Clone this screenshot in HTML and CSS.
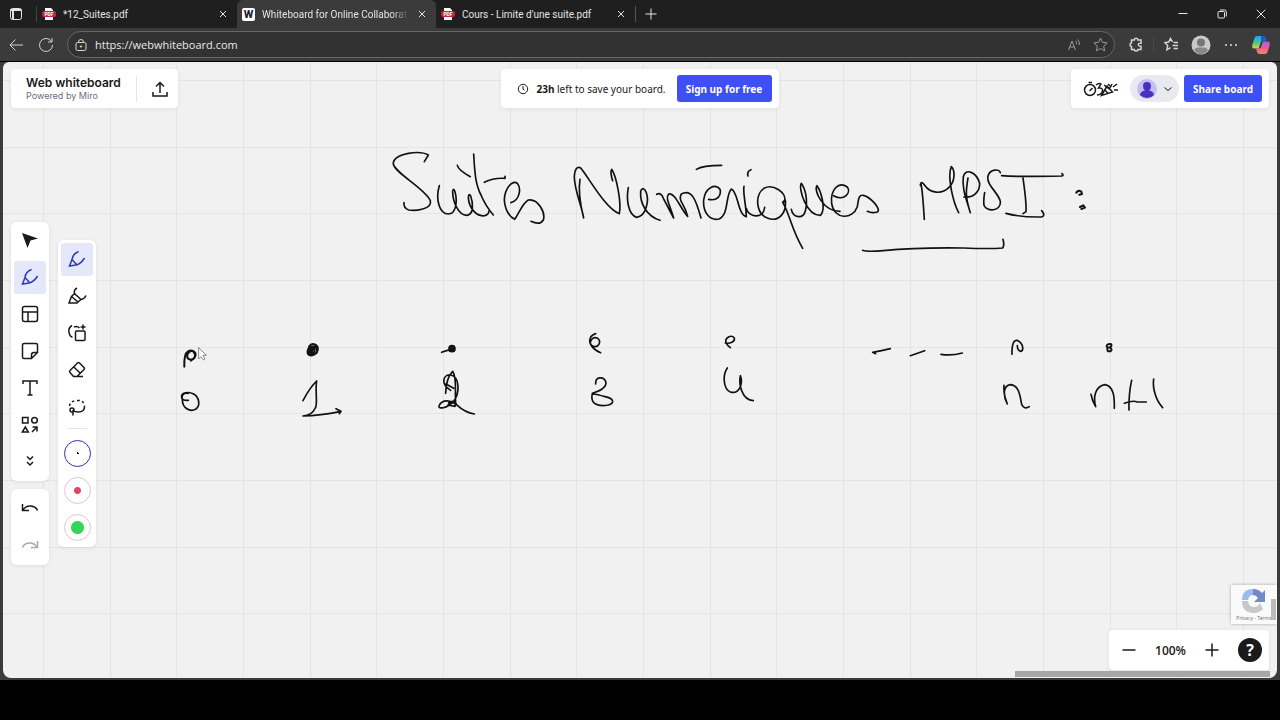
FILE: index.html
```html
<!DOCTYPE html>
<html lang="en">
  <head>
    <meta charset="UTF-8" />
    <meta name="viewport" content="width=device-width, initial-scale=1.0" />
    <title>Whiteboard for Online Collaboration</title>
    <link rel="stylesheet" href="styles.css">
  </head>
  <body>
    <div class="browser">
      <div class="tab-strip">
        <button class="tab-menu" aria-label="Tab actions">
          <svg width="14" height="14" viewBox="0 0 14 14"><rect x="1.5" y="1.5" width="11" height="11" rx="2" /><path d="M1.5 3h11M4 3v9" stroke-width="2" /></svg>
        </button>
        <div class="tab tab-first">
          <svg class="pdf" width="14" height="14" viewBox="0 0 14 14"><path d="M3 1h6l2 2v10H3z" fill="#fff" /><rect x="0" y="4" width="14" height="6" rx="2" fill="#c8243c" /><text x="7" y="9">PDF</text></svg>
          <span class="tab-name">*12_Suites.pdf</span>
          <button class="close" aria-label="Close tab"><svg width="8" height="8" viewBox="0 0 8 8"><path d="M1 1l6 6M7 1l-6 6" /></svg></button>
        </div>
        <div class="tab active">
          <span class="favicon">W</span>
          <span class="tab-name">Whiteboard for Online Collaborat</span>
          <button class="close" aria-label="Close tab"><svg width="8" height="8" viewBox="0 0 8 8"><path d="M1 1l6 6M7 1l-6 6" /></svg></button>
        </div>
        <div class="tab">
          <svg class="pdf" width="14" height="14" viewBox="0 0 14 14"><path d="M3 1h6l2 2v10H3z" fill="#fff" /><rect x="0" y="4" width="14" height="6" rx="2" fill="#c8243c" /><text x="7" y="9">PDF</text></svg>
          <span class="tab-name">Cours - Limite d'une suite.pdf</span>
          <button class="close" aria-label="Close tab"><svg width="8" height="8" viewBox="0 0 8 8"><path d="M1 1l6 6M7 1l-6 6" /></svg></button>
        </div>
        <button class="new-tab" aria-label="New tab"><svg width="12" height="12" viewBox="0 0 12 12"><path d="M6 .5v11M.5 6h11" /></svg></button>
        <div class="window-btns">
          <button aria-label="Minimize"><svg width="10" height="10" viewBox="0 0 10 10"><path d="M.5 4.5h9" /></svg></button>
          <button aria-label="Restore"><svg width="10" height="10" viewBox="0 0 10 10"><rect x="1" y="2.5" width="6.500" height="6.500" rx="1" /><path d="M3 1h4.500q1.800 0 1.800 1.800V7.500" /></svg></button>
          <button aria-label="Close"><svg width="10" height="10" viewBox="0 0 10 10"><path d="M.7 .7l8.600 8.600M9.300 .7L.7 9.300" /></svg></button>
        </div>
      </div>

      <div class="toolbar">
        <button aria-label="Back"><svg width="16" height="16" viewBox="0 0 16 16"><path d="M15 8H2M7.500 2.500L2 8l5.500 5.500" /></svg></button>
        <button aria-label="Refresh"><svg width="16" height="16" viewBox="0 0 16 16"><path d="M14.500 8a6.500 6.500 0 1 1-2-4.700l1.500 1.500M14 1v4h-4" /></svg></button>
        <div class="address">
          <svg width="14" height="14" viewBox="0 0 14 14"><rect x="2" y="4.500" width="10" height="8" rx="1.500" /><path d="M4.500 4.500V4a2.500 2.500 0 0 1 5 0v.5" /><circle cx="7" cy="8.500" r=".7" fill="#ddd" /></svg>
          <input type="text" aria-label="Address" value="https://webwhiteboard.com" />
          <button class="dim" aria-label="Read aloud"><svg width="14" height="14" viewBox="0 0 14 14"><path d="M1.500 12L5 3l3.500 9M2.800 9h4.400M8.500 3q1.500 1.300 1.200 3.300M10.500 1.500q2.500 2.300 1.800 5.500" /></svg></button>
          <button class="dim" aria-label="Favorite"><svg width="15" height="15" viewBox="0 0 15 15"><path d="M7.500 1l2 4.300 4.600.6-3.400 3.200.9 4.700-4.100-2.300-4.100 2.300.9-4.700L.9 5.900l4.600-.6z" /></svg></button>
        </div>
        <button aria-label="Extensions"><svg class="bold" width="15" height="15" viewBox="0 0 15 15"><path d="M5.300 3a1.800 1.800 0 0 1 3.600 0H12v3.200q-2.600-.2-2.600 1.500T12 9.200V12.500H9q0 1.500-1.900 1.500t-1.900-1.500H2.500V9.500Q1 9.200 1 7.700t1.500-1.900V3z" /></svg></button>
        <span class="divider"></span>
        <button aria-label="Favorites list"><svg class="bold" width="15" height="15" viewBox="0 0 15 15"><path d="M8.500 4.800L6.500 1.500 4.700 5 .8 5.600l2.900 2.800-.8 4.300 3.600-2M9.500 5.500H14M8.500 8.500H14M9.500 11.500H14" /></svg></button>
        <button aria-label="Profile"><svg class="solid" width="20" height="20" viewBox="0 0 20 20"><circle cx="10" cy="10" r="9.500" fill="#c9c9c9" /><circle cx="10" cy="7.500" r="4" fill="#777" /><path d="M3 15q1-2.500 4-2.500h6q3 0 4 2.500-3 4-7 4t-7-4" fill="#888" /></svg></button>
        <button aria-label="Settings"><svg class="solid" width="14" height="4" viewBox="0 0 14 4"><circle cx="2" cy="2" r="1" fill="#ddd" /><circle cx="7" cy="2" r="1" fill="#ddd" /><circle cx="12" cy="2" r="1" fill="#ddd" /></svg></button>
        <button aria-label="Copilot">
          <svg class="solid" width="20" height="20" viewBox="0 0 20 20">
            <defs>
              <linearGradient id="cool" x2="0" y2="1"><stop stop-color="#2a9df0" /><stop offset=".5" stop-color="#3cc59a" /><stop offset="1" stop-color="#e6cf35" /></linearGradient>
              <linearGradient id="warm" x2="0" y2="1"><stop stop-color="#a85cf0" /><stop offset=".5" stop-color="#ec5aa0" /><stop offset="1" stop-color="#f58a55" /></linearGradient>
            </defs>
            <path d="M6 1h6q2 0 2.500 2l.7 3H12q-2 0-2.600 2l-1.700 5.500H3.500Q.5 13.500 1.300 10L3.500 3Q4.200 1 6 1" fill="url(#cool)" />
            <path d="M10 1h2q2 0 2.500 2l.7 3H12q-1 0-2 1z" fill="#2459c9" />
            <path d="M14 19H9q-2.500 0-3-2l-.8-3.500H8q1.700 0 2.300-2L12 6.500h4.500q3 0 2.200 3.500l-2.200 7q-.7 2-2.500 2" fill="url(#warm)" />
          </svg>
        </button>
      </div>

      <main class="board">
        <svg class="canvas" width="100%" height="100%" aria-hidden="true">
          <path class="grid" d="M40.500 0V3000M107.500 0V3000M173.500 0V3000M240.500 0V3000M307.500 0V3000M373.500 0V3000M440.500 0V3000M507.500 0V3000M573.500 0V3000M640.500 0V3000M707.500 0V3000M773.500 0V3000M840.500 0V3000M907.500 0V3000M973.500 0V3000M1040.500 0V3000M1107.500 0V3000M1173.500 0V3000M1240.500 0V3000" />
          <path class="grid" d="M0 18.500H4000M0 85.500H4000M0 151.500H4000M0 218.500H4000M0 285.500H4000M0 351.500H4000M0 418.500H4000M0 485.500H4000M0 551.500H4000" />
          <!-- Suites N -->
          <g class="ink" transform="translate(377 78) scale(.3333)">
            <path d="M133 65L145 45Q125 33 85 40Q38 50 40 72C45 100 135 145 151 182C158 207 105 214 86 210Q70 204 72 188" />
            <path d="M178 137C166 178 178 222 205 222C228 222 233 185 225 155Q220 141 218 154C218 185 235 226 260 226C282 224 280 190 272 168Q266 158 265 173C267 205 290 231 314 227Q326 224 327 213" />
            <path d="M232 76Q235 90 271 110M281 42C284 90 285 130 303 165Q318 200 340 225M313 127Q340 113 375 115V109" />
            <path d="M393 188C420 180 424 145 412 130C398 118 374 145 373 180Q376 222 404 238C417 220 427 190 445 180C475 176 497 218 490 240Q480 257 453 244" />
            <path d="M600 118C593 160 605 210 611 234C606 200 583 150 583 110Q585 77 601 83C622 105 675 205 718 221C725 190 710 110 695 88Q690 97 698 122" />
          </g>
          <!-- umeriques -->
          <g class="ink" transform="translate(627 78) scale(.3333)">
            <path d="M-5 143C-12 178-5 225 20 232C50 228 57 180 49 158Q40 137 32 153C29 190 50 229 90 241" />
            <path d="M80 163Q94 156 100 175L131 234C120 195 105 175 116 162C136 157 150 205 173 229C164 190 143 184 154 162C185 145 198 180 213 234" />
            <path d="M236 178C262 184 275 166 270 148C258 130 226 140 221 180C218 220 242 243 267 237C297 225 286 165 304 147C325 155 322 222 349 230C348 190 338 160 342 139M349 205C354 231 400 240 404 202" />
            <path d="M199 88Q218 76 275 76M363 89Q350 94 354 108" />
            <path d="M463 186C473 158 428 130 402 145C374 164 377 221 412 234C446 248 470 219 466 180Q461 184 458 187C478 218 483 265 518 325" />
            <path d="M484 208C490 236 520 237 526 213C535 180 525 145 514 130C504 146 530 228 572 226C590 205 571 150 561 137C550 151 580 215 630 214" />
            <path d="M611 167C644 185 664 157 652 141C625 122 601 150 605 190C612 240 668 240 682 200C686 180 684 164 700 166C720 170 756 208 742 216Q726 221 712 214" />
          </g>
          <!-- MPSI : -->
          <g class="ink" transform="translate(847 88) scale(.3333)">
            <path d="M223 208C220 170 219 130 213 102M211 106Q213 90 224 106C240 130 276 134 296 113C317 94 315 60 304 50C291 80 309 155 326 188" />
            <path d="M354 84C348 120 345 140 361 188C349 148 335 115 340 80C346 52 380 67 389 100C390 124 371 145 342 141" />
            <path d="M451 68C449 56 420 56 414 78C408 105 444 126 451 154C454 184 410 187 402 166Q400 150 404 128M455 77Q500 81 634 78Q643 77 636 71M519 84C524 120 530 158 528 185L519 191M468 190Q510 202 575 201Q588 197 575 182" />
            <path d="M38 301Q50 306 100 302C200 292 260 293 340 294Q420 297 458 294Q464 286 459 268" />
            <path class="thick" d="M679 128Q685 119 694 125L696 132L688 134M690 171L700 166L705 173L694 177" />
          </g>
          <!-- 0 1 2 -->
          <g class="ink" transform="translate(157 258) scale(.3333)">
            <path class="thick" d="M73 140C72 115 74 100 84 94C96 87 110 96 106 108C98 126 79 120 82 104Q90 88 101 95Q112 112 93 122" />
            <path d="M85 241Q65 242 65 232C62 217 86 214 101 222C119 233 121 257 108 267C89 278 67 263 67 239Q62 218 84 220" />
            <path class="thick" d="M447 80C456 65 477 74 473 91C464 112 439 110 443 93C447 75 467 80 464 94Q456 108 447 94C447 74 476 74 471 98Q455 114 443 99Q457 97 462 83L451 87L458 98" />
            <path d="M429 242Q448 205 470 183C465 215 474 252 466 264Q456 286 429 288Q480 287 543 274L528 266M543 274L538 281" />
            <circle cx="876" cy="86" r="9" fill="#181818" /><path d="M845 97Q862 89 880 89" />
            <path d="M857 220C858 190 867 165 878 154C892 175 884 210 887 250M872 211C840 190 850 163 872 165C899 171 901 218 880 245C861 266 834 268 837 258C847 236 873 240 893 257Q914 277 943 282M858 192L881 205M866 248L887 242L885 259L864 255Q872 244 889 251" />
            <path d="M116 84V117L123 110L130 120L135 117L129 106H138Z" fill="#fff" stroke="#555" stroke-width="2" />
          </g>
          <!-- 3 4 -->
          <g class="ink" transform="translate(557 258) scale(.3333)">
            <path d="M107 41C84 48 85 73 100 79C116 84 125 64 113 55C98 48 86 64 94 77Q104 91 122 98" />
            <path d="M107 192C105 170 130 168 137 184C143 204 117 214 97 220M97 220C89 253 115 261 145 255C166 249 161 235 135 230Q112 223 98 222" />
            <path d="M496 69C510 72 526 65 523 54C514 42 494 54 498 68Q502 77 511 83" />
            <path d="M502 144C487 165 490 207 511 216C538 224 550 191 541 167C536 195 546 240 580 242" />
          </g>
          <!-- ... n n+1 -->
          <g class="ink" transform="translate(857 258) scale(.3333)">
            <path d="M47 101L38 97Q65 92 91 86M151 107L194 92M243 103Q275 108 307 99" />
            <path d="M456 103C455 75 460 58 474 62C490 70 492 92 482 94Q472 91 472 77" />
            <path class="thick" d="M740 80Q740 70 754 73Q757 82 743 83Q738 95 751 94Q760 88 748 83" />
            <path d="M432 196Q430 225 442 252C428 224 430 199 450 194C478 195 480 228 485 253Q493 270 508 260" />
            <path d="M693 223Q696 240 707 260C699 230 706 199 735 194C761 199 764 230 763 265M815 181Q806 220 807 270M793 250Q820 240 832 246H859M881 177C877 207 889 243 908 263" />
          </g>
        </svg>

        <header class="board-header">
          <div class="panel brand">
            <div class="brand-text">
              <strong>Web whiteboard</strong>
              <span>Powered by Miro</span>
            </div>
            <button class="export" aria-label="Export"><svg class="bold" width="16" height="16" viewBox="0 0 16 16"><path d="M8 12V1.500M4 5.500l4-4 4 4M1 11v4h14v-4" /></svg></button>
          </div>
          <div class="panel notice">
            <svg width="12" height="12" viewBox="0 0 12 12"><circle cx="6" cy="6" r="4.700" /><path d="M6 3v3.200l1.500 1" /></svg>
            <p><b>23h</b> left to save your board.</p>
            <button class="btn">Sign up for free</button>
          </div>
          <div class="panel share">
            <button class="reactions" aria-label="Activities"><svg class="bold" width="38" height="18" viewBox="0 0 38 18"><circle cx="8" cy="10" r="5.500" /><path d="M6.500 2.500h3.500M7.500 11l3-3M14 5q3-2.500 5-1l-2.500 4q4.500-.5 4 3T15 15M19.500 15.500L25 6l5.500 6zM23 10l3 3.500M23 6l7 5M22 5l3 2M26 4l2 2M28 8l2-4M31 7l4-3M32 10h4" /></svg></button>
            <button class="account" aria-label="Account">
              <svg width="20" height="20" viewBox="0 0 20 20"><circle cx="10" cy="10" r="10" fill="#c5bdf5" stroke="none" /><path d="M6 7a4 4 0 0 1 8 0q0 3-2 4.500 4.500.5 5 4.500-3 3-7 3t-7-3q.5-4 5-4.500Q6 10 6 7" fill="#4a2fc4" stroke="none" /></svg>
              <svg width="10" height="10" viewBox="0 0 10 10"><path d="M1.500 3.500L5 6.500l3.500-3" /></svg>
            </button>
            <button class="btn">Share board</button>
          </div>
        </header>

        <div class="tools">
          <div class="tool-column">
            <div class="panel tool-list main-tools">
              <button aria-label="Select"><svg width="20" height="20" viewBox="0 0 20 20"><path d="M2 3l16 5.500-7.500 2L7.500 18z" fill="#1a1a1a" stroke="none" /></svg></button>
              <button class="selected" aria-label="Pen"><svg width="20" height="20" viewBox="0 0 20 20"><path d="M11.500 2.500Q5.500 5 5 10.500L2.500 17l6.500-1Q14 15 17.500 9M5 10.500l4.500 5" /></svg></button>
              <button aria-label="Templates"><svg width="20" height="20" viewBox="0 0 20 20"><rect x="2.500" y="2.500" width="15" height="15" rx="2" /><path d="M2.500 8h15M8 8v9.500" /></svg></button>
              <button aria-label="Sticky note"><svg width="20" height="20" viewBox="0 0 20 20"><path d="M17.500 11.500V4q0-1.500-1.500-1.500H4Q2.500 2.500 2.500 4v12q0 1.500 1.500 1.500h7.500zM17.500 11.500H14q-2.500 0-2.500 2.500v3.500" /></svg></button>
              <button aria-label="Text"><svg width="20" height="20" viewBox="0 0 20 20"><path d="M3 6V3h14v3M10 3v14M7.500 17h5" /></svg></button>
              <button aria-label="Shapes"><svg width="20" height="20" viewBox="0 0 20 20"><path d="M2.500 2.500h5.500v5.500H2.500zM5.300 12l3 5H2.300zM12 17l5-5M12.500 12H17v4.500" /><circle cx="14.500" cy="5.300" r="2.800" /></svg></button>
              <button class="more" aria-label="More tools"><svg width="20" height="20" viewBox="0 0 20 20"><path d="M7 5.500l3 3 3-3M7 11l3 3 3-3" /></svg></button>
            </div>
            <div class="panel tool-list">
              <button aria-label="Undo"><svg width="20" height="20" viewBox="0 0 20 20"><path d="M2.500 6v6.500H9M3 12Q6 7.500 11 8t6.500 4.500" /></svg></button>
              <button aria-label="Redo" disabled><svg width="20" height="20" viewBox="0 0 20 20"><path d="M17.500 6v6.500H11M17 12q-3-4.500-8-4t-6.500 4.500" /></svg></button>
            </div>
          </div>
          <div class="panel tool-list">
            <button class="selected" aria-label="Pen"><svg width="20" height="20" viewBox="0 0 20 20"><path d="M11.500 2.500Q5.500 5 5 10.500L2.500 17l6.500-1Q14 15 17.500 9M5 10.500l4.500 5" /></svg></button>
            <button aria-label="Highlighter"><svg width="20" height="20" viewBox="0 0 20 20"><path d="M10 2Q6.500 4 7.500 7.500l6.500 6q3.500-.5 5-4M7.500 7.500l-3 3 6.500 5.500 3-2.500M4.500 10.500L2 17h8l1-1" /></svg></button>
            <button aria-label="Smart drawing"><svg width="20" height="20" viewBox="0 0 20 20"><rect x="8.500" y="8" width="9.500" height="9.500" rx="1" /><path d="M5 2.500Q1 5 2 9.500T5.500 14M7 4q3-1.500 5.500 1M13.500 4h5M16 1.500v5" /></svg></button>
            <button aria-label="Eraser"><svg width="20" height="20" viewBox="0 0 20 20"><path d="M3 10.500L10.500 3q1-1 2 0l4.500 4.500q1 1 0 2L10 16.500H6.500l-3.500-4q-1-1 0-2M6.800 7l6.500 6.300M8 16.500h8" /></svg></button>
            <button aria-label="Lasso"><svg width="20" height="20" viewBox="0 0 20 20"><path d="M2.500 9Q3 4 10 3.500T17.500 9" stroke-dasharray="2.500 2.500" /><path d="M17.500 9Q18 15 11 15q-3 0-5.500-2" /><circle cx="5" cy="13" r="2" /><path d="M5 15q2 1 .5 3.500" /></svg></button>
            <span class="line"></span>
            <button class="swatch thin" aria-label="Black, thin"></button>
            <button class="swatch red" aria-label="Red, medium"></button>
            <button class="swatch green" aria-label="Green, thick"></button>
          </div>
        </div>

        <footer class="board-footer">
          <div class="panel zoom">
            <button aria-label="Zoom out"><svg class="bold" width="14" height="14" viewBox="0 0 14 14"><path d="M.5 7h13" /></svg></button>
            <span>100%</span>
            <button aria-label="Zoom in"><svg class="bold" width="14" height="14" viewBox="0 0 14 14"><path d="M.5 7h13M7 .5v13" /></svg></button>
            <button class="help" aria-label="Help">?</button>
          </div>
        </footer>

        <div class="captcha">
          <svg width="28" height="26" viewBox="0 0 28 26"><path d="M2 12Q2 1 13 1v6q-4 0-5 5z" fill="#9bbcf0" /><path d="M13 1q6 0 9 4l3-3v12H14l4-4q-2-3-5-3z" fill="#7388ca" /><path d="M2 13h6q1 6 6 6 4 0 6-4l3 6q-4 4-9 4Q2 25 2 13" fill="#c8c8c8" /></svg>
          <span>Privacy - Terms</span>
        </div>
        <div class="scroll-y"></div>
        <div class="scroll-x"></div>
      </main>
    </div>
  </body>
</html>
```

FILE: styles.css
```css
* {
  box-sizing: border-box;
}
body {
  margin: 0;
  min-height: 100vh;
  display: flex;
  flex-direction: column;
  background-color: #000;
  font-family: "Noto Sans", sans-serif;
  font-size: 10px;
}
button {
  display: flex;
  align-items: center;
  justify-content: center;
  padding: 0;
  border: none;
  background: none;
  color: inherit;
  font-family: inherit;
  cursor: pointer;
}
svg {
  flex-shrink: 0;
  fill: none;
  stroke: currentColor;
}
.bold {
  stroke-width: 1.5;
}
.solid {
  stroke: none;
}
.browser {
  flex: 1;
  display: flex;
  flex-direction: column;
  margin-bottom: 40px;
  padding-bottom: 2px;
  background-color: #3b3b3b;
}

/* tabs */
.tab-strip {
  display: flex;
  align-items: center;
  height: 28px;
  background-color: #1f1f1f;
  color: #e4e4e4;
}
.tab-menu {
  width: 36px;
  padding-right: 4px;
}
.tab {
  display: flex;
  align-items: center;
  width: 199px;
  height: 28px;
  padding: 0 8px 0 5px;
  font-family: Roboto, sans-serif;
}
.tab-first {
  width: 201px;
  position: relative;
  padding-left: 6px;
}
.tab-first::before {
  content: "";
  position: absolute;
  left: 0;
  width: 1px;
  height: 16px;
  background-color: #444;
}
.tab.active {
  background-color: #3b3b3b;
  border-radius: 6px 6px 0 0;
}
.tab-name {
  flex: 1;
  margin: 0 7px;
  overflow: hidden;
  white-space: nowrap;
}
.active .tab-name {
  mask-image: linear-gradient(to right, #000 88%, transparent);
}
.pdf {
  stroke: none;
}
.pdf text {
  fill: #fff;
  font-size: 5px;
  font-weight: bold;
  text-anchor: middle;
}
.favicon {
  width: 13px;
  height: 13px;
  border-radius: 2px;
  background-color: #fff;
  color: #1b1b3a;
  font-size: 11px;
  font-weight: 800;
  line-height: 13px;
  text-align: center;
}
.new-tab {
  width: 30px;
  height: 16px;
  border-left: 1px solid #555;
}
.close {
  width: 12px;
  height: 12px;
}
.window-btns {
  display: flex;
  margin-left: auto;
}
.window-btns button {
  width: 39px;
  height: 28px;
}

/* address row */
.toolbar {
  display: flex;
  align-items: center;
  gap: 4px;
  height: 34px;
  padding: 0 6px 0 3px;
  border-bottom: 1px solid #000;
  color: #d4d4d4;
}
.toolbar button {
  width: 26px;
  height: 26px;
}
.address {
  flex: 1;
  display: flex;
  align-items: center;
  height: 27px;
  margin: 0 4px;
  padding: 0 1px 0 6px;
  border: 1px solid #666;
  border-radius: 14px;
  background-color: #323232;
}
.address input {
  flex: 1;
  min-width: 0;
  padding: 0 7px;
  border: none;
  outline: none;
  background: none;
  color: #e8e8e8;
  font-family: "Open Sans", sans-serif;
  font-size: 11px;
}
.address .dim {
  color: #999;
}
.divider {
  width: 1px;
  height: 14px;
  background-color: #4a4a4a;
}

/* board */
.board {
  flex: 1;
  position: relative;
  display: flex;
  flex-direction: column;
  min-height: 560px;
  margin: 0 3px;
  padding: 7px 8px 8px;
  border-radius: 6px 6px 8px 8px;
  background-color: #f1f1f1;
  color: #1a1a1a;
  overflow: hidden;
}
.canvas {
  position: absolute;
  top: 0;
  left: 0;
}
.grid {
  stroke: #e5e5e5;
}
.ink {
  stroke: #111;
  stroke-width: 5;
  stroke-linecap: round;
  stroke-linejoin: round;
}
.ink .thick {
  stroke-width: 6;
}
.panel {
  position: relative;
  border-radius: 4px;
  background-color: #fff;
  box-shadow: 0 1px 4px rgba(0, 0, 0, 0.08);
}
.board-header {
  display: grid;
  grid-template-columns: 1fr auto 1fr;
}
.board-header .panel {
  display: flex;
  align-items: center;
  height: 39px;
}
.btn {
  height: 27px;
  border-radius: 3px;
  background-color: #3d4ff5;
  color: #fff;
  font-size: 10px;
  font-weight: bold;
}
.brand {
  justify-self: start;
  padding-left: 15px;
}
.brand-text {
  width: 111px;
  border-right: 1px solid #e6e6e6;
  font-family: Inter, sans-serif;
}
.brand-text strong {
  display: block;
  font-size: 12px;
  font-weight: 600;
  line-height: 14px;
  white-space: nowrap;
}
.brand-text span {
  display: block;
  color: #6b6b80;
  font-size: 9px;
  line-height: 12px;
}
.export {
  width: 41px;
  padding-left: 5px;
  height: 39px;
}
.notice {
  padding: 0 7px 0 16px;
}
.notice p {
  margin: 0 11px 0 7px;
}
.notice .btn {
  width: 95px;
}
.share {
  justify-self: end;
  padding: 0 7px 0 11px;
}
.account {
  gap: 6px;
  width: 49px;
  height: 27px;
  margin: 0 5px 0 10px;
  border-radius: 14px;
  background-color: #e9eaf0;
}
.share .btn {
  width: 78px;
}

/* tools */
.tools {
  flex: 1;
  display: flex;
  align-items: center;
  gap: 9px;
  margin-top: 48px;
}
.tool-column {
  display: flex;
  flex-direction: column;
  gap: 8px;
}
.tool-list {
  display: flex;
  flex-direction: column;
  gap: 4px;
  padding: 3px;
  border-radius: 6px;
}
.main-tools {
  padding: 2px 3px 5px;
}
.tool-list button {
  width: 32px;
  height: 33px;
  border-radius: 3px;
}
.tool-list svg {
  stroke-width: 1.5;
}
.tool-list .more {
  height: 30px;
}
.tool-list .selected {
  background-color: #e5e7fb;
  color: #2f3ab2;
}
.tool-list button:disabled {
  color: #aaa;
}
.line {
  height: 1px;
  margin: 0 6px 4px;
  background-color: #e6e6e6;
}
.swatch::before {
  content: "";
  width: 25px;
  height: 25px;
  border: 1px solid #d9c8cd;
  border-radius: 50%;
}
.swatch.thin::before {
  border-color: #2e2eb8;
  background: radial-gradient(circle, #000 1px, transparent 1px);
}
.swatch.red::before {
  background: radial-gradient(circle, #da4767 3px, transparent 4px);
}
.swatch.green::before {
  background: radial-gradient(circle, #35d657 6px, transparent 7px);
}

/* bottom right */
.board-footer {
  display: flex;
  justify-content: flex-end;
}
.zoom {
  display: flex;
  align-items: center;
  height: 40px;
  padding: 0 7px 0 8px;
}
.zoom button {
  width: 24px;
  height: 24px;
}
.zoom span {
  width: 59px;
  font-family: "Open Sans", sans-serif;
  font-size: 12px;
  font-weight: 600;
  text-align: center;
}
.zoom .help {
  margin-left: 14px;
  border-radius: 50%;
  background-color: #1a1a1a;
  color: #fff;
  font-size: 16px;
  font-weight: bold;
}
.captcha {
  position: absolute;
  right: 0;
  bottom: 54px;
  display: flex;
  flex-direction: column;
  align-items: center;
  width: 46px;
  height: 39px;
  padding-top: 3px;
  background-color: #fafafa;
  box-shadow: 0 0 3px rgba(0, 0, 0, 0.3);
}
.captcha svg {
  stroke: none;
}
.captcha span {
  color: #777;
  font-size: 5px;
  line-height: 8px;
  white-space: nowrap;
}
.scroll-y {
  position: absolute;
  right: 1px;
  bottom: 58px;
  width: 5px;
  height: 21px;
  background-color: #bbb;
}
.scroll-x {
  position: absolute;
  right: 7px;
  bottom: 1px;
  width: 20%;
  height: 6px;
  background-color: #a6a6a6;
}
```
